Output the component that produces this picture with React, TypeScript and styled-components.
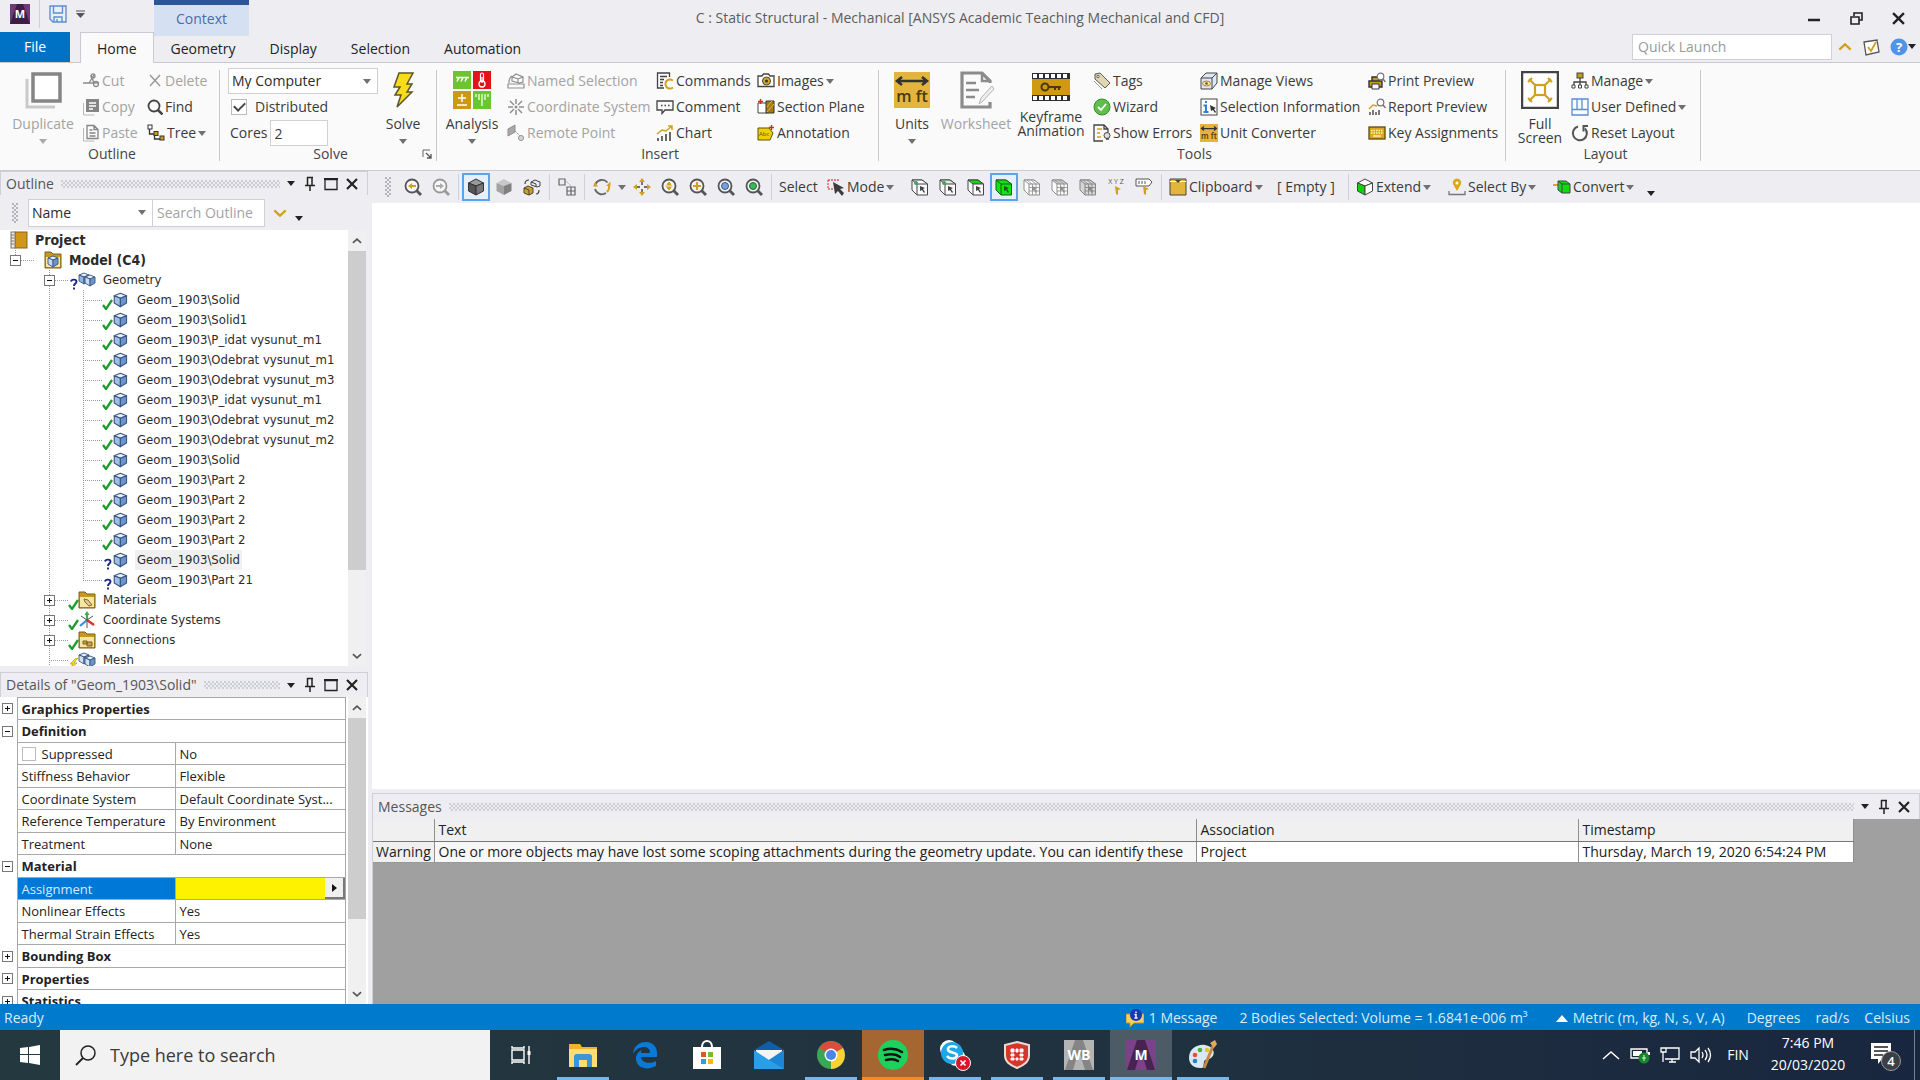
import React from "react";
import styled, { createGlobalStyle, css } from "styled-components";

const UI = `"Open Sans", "Noto Sans", sans-serif`;
const TREE = `"DejaVu Sans Condensed", "Noto Sans", sans-serif`;
const INK = "#3a3a3a";
const GOLD = "#d0a020";
const MUTED = "#a3a3a3";

const GlobalStyle = createGlobalStyle`
  * { box-sizing: border-box; }
  html, body, #root { height: 100%; }
  body { margin: 0; overflow: hidden; background: #eeeef2; font-family: ${UI}; font-size: 14px; line-height: 16px; color: #2b2b2b; }
  button, input, select { font: inherit; color: inherit; margin: 0; padding: 0; border: 0; background: none; border-radius: 0; }
  svg { display: block; flex: none; }
`;

/* ------------------------------------------------------------------ icons */

type IconProps = { w?: number; h?: number; box?: string; children?: React.ReactNode };
const Icon = ({ w = 18, h = w, box = `0 0 ${w} ${h}`, children }: IconProps) => (
  <svg width={w} height={h} viewBox={box} fill="none" aria-hidden="true">{children}</svg>
);

const Caret = ({ color = "#707070", w = 8 }: { color?: string; w?: number }) => (
  <Icon w={w} h={5} box="0 0 8 5"><path d="M0 0h8L4 5z" fill={color} /></Icon>
);
const Chevron = ({ color, up, w = 16 }: { color: string; up?: boolean; w?: number }) => (
  <Icon w={w} h={10} box="0 0 16 10">
    <path d={up ? "M1.500 8L8 2l6.500 6" : "M1.500 2L8 8l6.500-6"} stroke={color} strokeWidth="2.600" />
  </Icon>
);
const Grip = () => (
  <Icon w={8} h={22}>
    {[0, 4, 8, 12, 16].map((y) => (
      <g key={y} fill="#b4b4ba">
        <rect x="0" y={y + 1} width="2" height="2" /><rect x="4" y={y + 1} width="2" height="2" />
        <rect x="2" y={y + 3} width="2" height="2" />
      </g>
    ))}
  </Icon>
);
const Pin = () => (
  <Icon w={12} h={16}><path d="M3.500 1v8M3 1.500h6M8 1v8M1 9.500h10M6 10v5" stroke="#222" strokeWidth="1.500" /></Icon>
);
const Maximize = () => (
  <Icon w={14} h={14}><path d="M1 2.500h12v10H1z" stroke="#222" strokeWidth="1.300" /><path d="M0 2h14" stroke="#222" strokeWidth="2" /></Icon>
);
const Cross = ({ color = "#222", w = 12 }: { color?: string; w?: number }) => (
  <Icon w={w} box="0 0 12 12"><path d="M1 1l10 10M11 1L1 11" stroke={color} strokeWidth="2.200" /></Icon>
);

const AppLogo = () => (
  <Icon w={20} box="0 0 20 20">
    <rect width="20" height="20" fill="#6d3c78" /><path d="M7 0h6l7 20H0z" fill="#3d1e46" />
    <text x="10" y="14" fontSize="11" fontWeight="700" fill="#fff" textAnchor="middle" fontFamily="Open Sans">M</text>
  </Icon>
);
const Save = () => (
  <Icon w={18}><path d="M1 1h16v16H4l-3-3zM4.500 1v7h9V1M5 17v-5h8v5M8 14v3" stroke="#5b8fd6" strokeWidth="1.400" /></Icon>
);

const Duplicate = () => (
  <Icon w={38}>
    <path d="M3 8v28h28" stroke="#c9c9c9" strokeWidth="3" /><rect x="9" y="3" width="27" height="27" fill="#fff" stroke="#858585" strokeWidth="3.500" />
  </Icon>
);
const Cut = () => (
  <Icon><path d="M1 11h16M7 11l5-8M9 3l3 8" stroke="#8c8c8c" strokeWidth="1.400" /><circle cx="14" cy="12" r="2.500" stroke="#8c8c8c" strokeWidth="1.300" /><circle cx="11" cy="4" r="2" stroke="#8c8c8c" strokeWidth="1.300" /></Icon>
);
const Copy = () => (
  <Icon><path d="M1.500 5v12h11" stroke="#b8b8b8" /><rect x="4" y="1" width="13" height="13" fill="#858585" /><path d="M7 5h7M7 8h7M7 11h4" stroke="#fff" strokeWidth="1.300" /></Icon>
);
const Paste = () => (
  <Icon><path d="M1.500 4v13h11" stroke="#b8b8b8" /><path d="M5 1.500h7l4 4v9H5zM12 1.500v4h4M7.500 6h3M7.500 9h6M7.500 12h6" stroke="#858585" strokeWidth="1.300" /></Icon>
);
const Remove = () => (
  <Icon w={16}><path d="M3 2l10 11M13 2L3 13" stroke="#9a9a9a" strokeWidth="1.500" /></Icon>
);
const Find = () => (
  <Icon w={16}><circle cx="7" cy="7" r="5.500" stroke="#444" strokeWidth="1.800" /><path d="M11 11l4.500 4.500" stroke="#444" strokeWidth="2.500" /></Icon>
);
const TreeIcon = () => (
  <Icon w={18}>
    <path d="M2.500 5v5h5M7.500 10v5h6" stroke="#333" strokeWidth="1.300" /><rect x="1" y="1" width="4" height="4" stroke="#333" fill="#fff" />
    <rect x="7" y="7.500" width="4" height="4" stroke="#333" fill="#cf9f1a" /><rect x="13" y="12" width="4" height="4" stroke="#333" fill="#cf9f1a" />
  </Icon>
);
const Bolt = () => (
  <Icon w={38}><path d="M15 2h14l-6 11h5l-5 8h5L13 36l4-12h-6l5-8h-6z" fill="#f7dc1c" stroke="#5a5530" strokeWidth="1.500" /></Icon>
);
const Launcher = () => (
  <Icon w={10}><path d="M1 8V1h7" stroke="#666" /><path d="M4 4l5 5M9 5v4H5" stroke="#555" strokeWidth="1.300" /></Icon>
);
const Analysis = () => (
  <Icon w={38}>
    <rect width="18" height="18" fill="#6ac52f" /><path d="M3 6.500h13M4 10.500l2-4M8 10.500l2-4M12 10.500l2-4" stroke="#fff" strokeWidth="1.500" />
    <rect x="20" width="18" height="18" fill="#e3121b" /><circle cx="29" cy="13" r="3" stroke="#fff" strokeWidth="1.300" /><path d="M27.500 10.500V3.500c0-2 3-2 3 0v7M29 6v6" stroke="#fff" strokeWidth="1.200" />
    <rect y="20" width="18" height="18" fill="#cb9a12" /><path d="M9 23v8M5 27h8M4 34h10" stroke="#fff" strokeWidth="1.500" />
    <rect x="20" y="20" width="18" height="18" fill="#6ac52f" /><path d="M23 23v3M26 23v6M29 23v12M32 23v6M35 23v3" stroke="#e8ffe0" strokeWidth="1.400" />
  </Icon>
);
const NamedSel = () => (
  <Icon><path d="M1 12h16v4H1zM5 9V5l4-3 7 3v5l-4 1zM5 5l6 2v4M11 7l5-2M2 11c0-4 1-6 3-7" stroke="#8f8f8f" strokeWidth="1.200" /></Icon>
);
const CoordSys = () => (
  <Icon><path d="M9 1v5M9 12v5M1 9h5M12 9h5M3 3l4 4M11 11l4 4M15 3l-4 4M7 11l-4 4" stroke="#8f8f8f" strokeWidth="1.500" /><circle cx="9" cy="9" r="1.500" fill="#8f8f8f" /></Icon>
);
const RemotePt = () => (
  <Icon><path d="M1 5l7-4v7l-7 4z" fill="#a9a9a9" stroke="#8f8f8f" /><path d="M8 7l5 5" stroke="#8f8f8f" strokeDasharray="2 1" /><circle cx="14" cy="14" r="2.500" fill="#d8d8d8" stroke="#8f8f8f" /></Icon>
);
const Commands = () => (
  <Icon><path d="M8 16H1.500V1h12v4M4 4.500h7M4 7.500h4M4 10.500h3M4 13.500h3" stroke="#444" strokeWidth="1.300" /><path d="M17 8.500c-4-2.500-8 0-7.500 4s4.500 5 7.500 3" stroke={GOLD} strokeWidth="2" /></Icon>
);
const Comment = () => (
  <Icon><path d="M1 3h16v9H9l-3 3.500V12H1z" stroke="#444" strokeWidth="1.300" /><path d="M5 7.500h1.500M8.500 7.500H10M12 7.500h1.500" stroke="#444" strokeWidth="1.300" /></Icon>
);
const Chart = () => (
  <Icon><path d="M2 17v-3M6 17v-5M10 17V10M14 17V8" stroke="#444" strokeWidth="1.600" /><path d="M1 10l5-4 4 1 6-5M12 2h4v4" stroke={GOLD} strokeWidth="1.500" /></Icon>
);
const Images = () => (
  <Icon><path d="M1 4h4l1.500-2h5L13 4h4v10.500H1z" fill="#fff" stroke="#444" strokeWidth="1.300" /><circle cx="9.500" cy="9" r="4" fill="#d6a91f" stroke="#444" /><circle cx="9.500" cy="9" r="1.500" fill="#333" /></Icon>
);
const Section = () => (
  <Icon><path d="M1 5h9v10H1z" fill="#fff" stroke="#444" /><path d="M9 3h8v12H9z" fill="#a67c12" stroke="#333" /><path d="M10 9l5-6M10 14l7-8" stroke="#e0b840" /><path d="M1 3.500h5M3.500 1v5" stroke="#d22" strokeWidth="1.400" /></Icon>
);
const Annotation = () => (
  <Icon><path d="M1 4h11l4 5-3 7H1z" fill="#f0d000" stroke="#5e5300" /><text x="2" y="12" fontSize="6" fill="#5e5300" fontFamily="Open Sans">Abc</text><path d="M12 3.500h5M14.500 1v5" stroke="#d22" strokeWidth="1.400" /></Icon>
);
const Units = ({ s = 36 }: { s?: number }) => (
  <Icon w={s} box="0 0 36 36">
    <rect width="36" height="36" fill="#e3b53c" /><path d="M4 9h28M8 5L3 9l5 4M28 5l5 4-5 4" stroke="#333" strokeWidth="2.500" />
    <text x="18" y="30" fontSize="16" fontWeight="600" fill="#4a3a10" textAnchor="middle" fontFamily="Open Sans">m ft</text>
  </Icon>
);
const Worksheet = () => (
  <Icon w={38}><path d="M33 12V10L25 2H5v34h28v-5" stroke="#8b8b8b" strokeWidth="3.200" /><path d="M25 2v8h8M9 12h10M9 19h13M9 26h9" stroke="#8b8b8b" strokeWidth="2.500" /><path d="M22 33l2-6 11-12 2 3-11 12z" fill="#eee" stroke="#b5b5b5" /></Icon>
);
const Keyframe = () => (
  <Icon w={38} h={28}>
    <rect width="38" height="28" fill="#2f2f2f" /><rect y="6" width="38" height="16" fill="#cf9a12" />
    {[1, 7, 13, 19, 25, 31].map((x) => (<g key={x} fill="#fff"><rect x={x} y="1" width="4" height="4" /><rect x={x} y="23" width="4" height="4" /></g>))}
    <circle cx="13" cy="14" r="3.500" stroke="#4a3a10" strokeWidth="2" /><path d="M17 14h12M23 14v3M27 14v3" stroke="#4a3a10" strokeWidth="2" />
  </Icon>
);
const Tags = () => (
  <Icon><path d="M2 2l5-1 10 10-5 5L2 7z" fill="#e0d6b0" stroke="#5a5a5a" /><circle cx="5" cy="4.500" r="1.200" fill="#fff" stroke="#5a5a5a" /><path d="M1 9l8 8" stroke="#999" /></Icon>
);
const Wizard = () => (
  <Icon><circle cx="9" cy="9" r="8" fill="#5ec04a" stroke="#3e8a30" /><path d="M5 9l3 3 5-6" stroke="#fff" strokeWidth="1.800" /></Icon>
);
const ShowErrors = () => (
  <Icon><path d="M10 17H1V1h10l4 4v3M11 1v4h4" stroke="#444" strokeWidth="1.300" /><path d="M4 5h5M4 9h3M4 13h4" stroke={GOLD} strokeWidth="1.300" /><circle cx="14" cy="11.500" r="3" fill="#ddd" stroke="#444" /><path d="M13 15h3" stroke="#444" strokeWidth="1.500" /></Icon>
);
const ManageViews = () => (
  <Icon><path d="M1 6l5-5h11v10l-5 6H1zM12 6v11M12 6l5-5M1 6h11" fill="#dde8f5" stroke="#444" /><ellipse cx="6.500" cy="11.500" rx="4" ry="2.500" fill="#f1e4ad" stroke="#b18a1b" /><circle cx="6.500" cy="11.500" r="1.300" fill="#6d560c" /></Icon>
);
const SelInfo = () => (
  <Icon><rect x="1" y="1" width="16" height="16" fill="#fff" stroke="#444" /><path d="M3.500 7.500H6V14M3.500 14h5M6 3v2" stroke="#2f7fd4" strokeWidth="2" /><path d="M10 7l6 3-2 1 2 3-1 1-2-3-2 1z" fill="#333" /></Icon>
);
const Lens = () => (<><circle cx="12.500" cy="4.500" r="3.300" fill="#fff" stroke="#777" strokeWidth="1.200" /><path d="M15 7l2.500 3" stroke="#777" strokeWidth="1.500" /></>);
const PrintPrev = () => (
  <Icon><path d="M4 9V5h7v4M1 9h13v6H1z" fill="#c49a1c" stroke="#333" strokeWidth="1.400" /><path d="M4 12h7v5H4z" fill="#fff" stroke="#333" /><Lens /></Icon>
);
const ReportPrev = () => (
  <Icon><path d="M2 17v-3M5 17v-5M8 17v-3M11 17v-5" stroke="#444" strokeWidth="1.400" /><path d="M1 11l4-4 4 1" stroke={GOLD} strokeWidth="1.400" /><Lens /></Icon>
);
const Keyboard = () => (
  <Icon><rect x="1" y="3" width="16" height="12" fill="#d9a91d" stroke="#5c4a14" strokeWidth="1.300" /><path d="M3 6.500h12M3 9h12" stroke="#fff3c4" strokeWidth="1.400" strokeDasharray="1.500 1" /><path d="M5 12h8" stroke="#fff3c4" strokeWidth="1.400" /></Icon>
);
const FullScreen = () => (
  <Icon w={38}><rect x="1" y="1" width="36" height="36" fill="#fff" stroke="#444" strokeWidth="2.500" /><rect x="14" y="14" width="10" height="10" stroke={GOLD} strokeWidth="2.200" /><path d="M14 14L8 8M24 14l6-6M14 24l-6 6M24 24l6 6M7 11l4-4M27 7l4 4M7 27l4 4M27 31l4-4" stroke={GOLD} strokeWidth="2.200" /></Icon>
);
const ManageIcon = () => (
  <Icon><path d="M9 6v4M3 14v-4h12v4M9 10v4" stroke="#444" strokeWidth="1.300" /><rect x="6" y="1" width="6" height="5" fill="#c49a1c" stroke="#444" /><path d="M1 13h3v3H1zM7.500 13h3v3h-3zM14 13h3v3h-3z" fill="#fff" stroke="#444" /></Icon>
);
const UserDefined = () => (
  <Icon><path d="M1 1h16v16H1zM1 11.500h16M6 1v10.500M11 1v10.500" stroke="#5b8fd6" strokeWidth="1.300" /></Icon>
);
const Reset = () => (
  <Icon><path d="M7 2.500a7 7 0 1 0 7 2" stroke="#555" strokeWidth="2" /><path d="M11.500 2H17M12.500 2v5.500" stroke="#555" strokeWidth="2" /></Icon>
);
const TickNote = () => (
  <Icon><path d="M2 4l13-2 2 12-13 3z" fill="#fff" stroke="#555" strokeWidth="1.300" /><path d="M6 9l3 4 5-9" stroke={GOLD} strokeWidth="1.800" /></Icon>
);
const Help = () => (
  <Icon><circle cx="9" cy="9" r="8.500" fill="#4f94e8" /><text x="9" y="14" fontSize="13" fontWeight="700" fill="#fff" textAnchor="middle" fontFamily="Open Sans">?</text></Icon>
);

const Mag = ({ children, color = "#555" }: { children?: React.ReactNode; color?: string }) => (
  <Icon><circle cx="8" cy="8" r="6.500" stroke={color} strokeWidth="1.800" fill="#f7f7f7" />{children}<path d="M12.500 12.500l4.500 4.500" stroke={color} strokeWidth="2.800" /></Icon>
);
const Cube = ({ top, left, right, line = "#444" }: { top: string; left: string; right: string; line?: string }) => (
  <Icon><g stroke={line} strokeLinejoin="round"><path d="M1.500 5L9 1l7.500 4L9 8z" fill={top} /><path d="M1.500 5L9 8v9l-7.500-4z" fill={left} /><path d="M9 8l7.500-3v8L9 17z" fill={right} /></g></Icon>
);
const SwapCubes = () => (
  <Icon><path d="M8 4l4-2 5 2v4l-3 1-6-2zM8 4l5 2v3" fill="#e8e8ee" stroke="#444" /><path d="M1 10l4-2 5 2v5l-4 2-5-2zM1 10l5 2v5" fill={GOLD} stroke="#444" /><path d="M2 6c0-3 2-4 4-4M16 12c0 3-1 4-3 4" stroke="#444" strokeWidth="1.200" /></Icon>
);
const Explode = () => (
  <Icon><path d="M1 1h6v6H1zM9 9h8v8H9zM13 9v8M9 13h8" stroke="#666" strokeWidth="1.200" /><path d="M8 3l5 5" stroke="#bbb" /></Icon>
);
const Rotate = () => (
  <Icon><path d="M2.500 6a7.200 7.200 0 0 1 12-1.500" stroke="#666" strokeWidth="1.800" /><path d="M16 8a7.200 7.200 0 0 1-2 6" stroke={GOLD} strokeWidth="1.800" /><path d="M13 15A7.200 7.200 0 0 1 2 11" stroke="#666" strokeWidth="1.800" /><path d="M0 8.500h5L2 4zM17.500 3.500V8h-4.500z" fill={GOLD} /></Icon>
);
const Pan = () => (
  <Icon><path d="M9 0l3 4H6zM9 18l3-4H6zM0 9l4-3v6zM18 9l-4-3v6z" fill={GOLD} /><path d="M9 4v3M9 11v3M4 9h3M11 9h3" stroke="#444" strokeWidth="1.400" /></Icon>
);
const ModeIcon = () => (
  <Icon><path d="M1 2h11M1 2v9h5" stroke="#e25555" strokeWidth="1.300" strokeDasharray="2 1" /><path d="M6 4l11 6-4 1 4 4-2 3-4-5-3 3z" fill="#3c3c3c" /></Icon>
);
const SelCube = ({ fill = "#fbfbfd", top = fill, dot, line = "#444", cross }: { fill?: string; top?: string; dot?: boolean; line?: string; cross?: boolean }) => (
  <Icon>
    <path d="M1 2h10l5.500 4v11H6L1 12z" fill={fill} stroke={line} /><path d="M1 2h10l5.500 4H6z" fill={top} stroke={line} /><path d="M6 6v11" stroke={line} />
    {cross && <path d="M6 9.500h10M6 13h10M9.500 6v11M13 6v11M4 2l5 4M8 2l5 4" stroke={line} strokeWidth="0.800" />}
    {dot && <circle cx="5" cy="5" r="2" fill="#3ba55a" />}
    <path d="M9 8l5 2-2 1 2 3-1 1-2-3-2 1z" fill={line} />
  </Icon>
);
const Wand = ({ tag }: { tag?: boolean }) => (
  <Icon>
    {tag ? <path d="M1 1h13l3 3-3 4H1zM4 3v3M7 3v3M10 3v3" fill="#fff" stroke="#555" /> :
      <text x="9" y="6" fontSize="7" fill="#555" textAnchor="middle" fontFamily="Open Sans">X Y Z</text>}
    <path d="M8 8l6 3-3 1v5l-2-1z" fill={GOLD} />
  </Icon>
);
const Clip = () => (<Icon><path d="M1 1h16v16H1z" fill="#e3b53c" stroke="#444" /><path d="M1 3.500h16" stroke="#fff" /><path d="M6 2l3 3 3-3z" fill="#444" /></Icon>);
const Marker = () => (
  <Icon><path d="M9 13L5 6a4.200 4.200 0 1 1 8 0z" fill="#dda51b" /><circle cx="9" cy="5" r="1.500" fill="#fff" /><path d="M1 13v3.500h16V13" stroke="#777" strokeWidth="1.300" /></Icon>
);
const Convert = () => (
  <Icon><path d="M0 7h5" stroke={GOLD} strokeWidth="1.800" /><path d="M5 3h8l4 3v9H9l-4-3z" fill="#15d815" stroke="#444" /><path d="M5 3l4 3h8M9 6v9" stroke="#444" /></Icon>
);

const Book = () => (<Icon><rect x="5" y="1" width="12" height="16" fill="#d0961a" stroke="#8a6410" /><rect x="1" y="1" width="4" height="16" fill="#f4ecd0" stroke="#777" /><path d="M1 4h3M1 7h3M1 10h3M1 13h3" stroke="#777" /></Icon>);
const Folder = ({ children }: { children?: React.ReactNode }) => (
  <Icon><path d="M1 1h6l2 2h8v14H1z" fill="#c8971f" stroke="#7b6118" /><path d="M2 6h14v10H2z" fill="#f5e6a8" />{children}</Icon>
);
const CubeShape = ({ x, y, light = "#c4dbf3" }: { x: number; y: number; light?: string }) => (
  <g transform={`translate(${x} ${y})`} stroke="#3a5580" strokeWidth="0.900" strokeLinejoin="round">
    <path d="M1 3l5-2 5 2-5 2z" fill="#e4f0fc" /><path d="M1 3l5 2v7L1 9z" fill={light} /><path d="M6 5l5-2v6l-5 3z" fill="#6a94cc" />
  </g>
);
const BodyIcon = () => (<Icon w={16} box="0 0 13 13"><CubeShape x={0} y={0} light="#9fc0e6" /></Icon>);
const GeometryIcon = () => (<Icon><CubeShape x={0} y={1} light="#8fb2de" /><CubeShape x={6} y={3} /></Icon>);
const MeshIcon = () => (<Icon><CubeShape x={0} y={1} light="#d5dfec" /><CubeShape x={6} y={4} light="#d5dfec" /></Icon>);
const CoordIcon = () => (
  <Icon><path d="M9 9V2" stroke="#36b34a" strokeWidth="2.200" /><path d="M6.500 4L9 0l2.500 4z" fill="#36b34a" /><path d="M9 9l7 5" stroke="#e03030" strokeWidth="2.500" /><path d="M9 9l-7 6" stroke="#3a8ee0" strokeWidth="2.200" /><path d="M9 9l6-4M9 9L3 5M9 9v8" stroke="#555" /></Icon>
);
const Tick = () => (<Icon w={11} h={12}><path d="M1 7l3 4 6-9" stroke="#1f9a2c" strokeWidth="2.300" /></Icon>);
const Quest = () => (<Icon w={11} h={12}><path d="M3 3.500C3.500 1 8.500 1 8.500 3.700 8.500 5.500 6 5.700 6 8M6 9.500v2" stroke="#16248c" strokeWidth="1.900" /></Icon>);
const Flash = () => (<Icon w={11} h={12}><path d="M8 0L2 6h3l-4 6 8-7H6l4-5z" fill="#f3dc3a" stroke="#b59a1a" strokeWidth="0.700" /></Icon>);

/* ---------------------------------------------------------- window chrome */

const Window = styled.div`display: flex; flex-direction: column; height: 100vh; min-height: 700px;`;
const TitleBar = styled.header`display: grid; grid-template-columns: 1fr auto 1fr; height: 32px; flex: none; color: #5c5c5c;`;
const TitleLeft = styled.div`display: flex;`;
const QuickBar = styled.div`display: flex; align-items: center; width: 154px; height: 28px; padding-left: 10px; gap: 9px;`;
const ContextTag = styled.div`width: 95px; border-top: 5px solid #2b579a; background: #d5e0f3; color: #4a6cae; text-align: center; line-height: 27px;`;
const Title = styled.h1`margin: 0; font-size: 14px; font-weight: 400; line-height: 36px;`;
const WindowButtons = styled.div`display: flex; justify-content: flex-end; padding-right: 1px;`;
const PlainButton = styled.button<{ $w?: number }>`
  display: flex; align-items: center; justify-content: center; flex: none; ${(p) => p.$w && `width: ${p.$w}px;`}
`;
const VLine = styled.i`width: 1px; align-self: stretch; background: #d0d0d6;`;

const TabRow = styled.nav`display: flex; height: 31px; flex: none; position: relative; z-index: 1; margin-bottom: -1px;`;
const FileTab = styled.button`width: 70px; height: 30px; margin-right: 10px; background: #0072c6; color: #fff;`;
const Tab = styled.button<{ $on?: boolean }>`
  padding: 1px 16px 0; height: 31px; border: 1px solid transparent; border-bottom: 0; color: #222;
  ${(p) => p.$on && css`background: #fafafa; border-color: #c9c9d2;`}
`;
const TabTools = styled.div`display: flex; align-items: center; margin-left: auto; height: 29px; padding-right: 4px; gap: 6px;`;
const Quick = styled.input`width: 200px; height: 26px; padding: 0 5px; background: #fff; border: 1px solid #cfcfd6; &::placeholder { color: #9a9a9a; opacity: 1; }`;

/* ----------------------------------------------------------------- ribbon */

const Ribbon = styled.div`display: flex; flex: none; background: #fafafa; border: solid #c9c9d2; border-width: 1px 0;`;
const Group = styled.section<{ $w: number }>`
  display: grid; grid-template-rows: 78px 16px; width: ${(p) => p.$w}px; padding: 5px 0 8px; flex: none;
  background: linear-gradient(#c9c9cf, #c9c9cf) right 7px / 1px 91px no-repeat;
`;
const GroupBody = styled.div`display: flex; padding-left: 8px;`;
const GroupName = styled.div`
  display: grid; grid-template-columns: 1fr auto 1fr; color: #444; padding-left: 9px; padding-right: 5px;
  span { grid-column: 2; } button { justify-self: end; align-self: center; }
`;
const Col = styled.div<{ $w: number }>`display: grid; grid-template-rows: repeat(3, 26px); align-items: center; justify-items: start; width: ${(p) => p.$w}px; flex: none;`;
const Small = styled.button`
  display: flex; align-items: center; gap: 2px; height: 24px; white-space: nowrap; color: ${INK};
  &:disabled { color: ${MUTED}; }
`;
const Big = styled.button<{ $w: number }>`
  display: flex; flex-direction: column; align-items: center; width: ${(p) => p.$w}px; flex: none; color: ${INK};
  line-height: 14px; padding-top: 3px;
  &:disabled { color: ${MUTED}; }
`;
const BigArt = styled.span`display: grid; place-items: center; height: 38px; margin-bottom: 8px;`;
const BigText = styled.span`display: block; white-space: pre; margin-bottom: 8px;`;
const Combo = styled.span<{ $w: number; $h: number }>`
  display: grid; grid-template-columns: 1fr 20px; align-items: center; width: ${(p) => p.$w}px; height: ${(p) => p.$h}px; background: #fff; border: 1px solid #cfcfd6;
  select { appearance: none; grid-area: 1 / 1 / 2 / 3; height: 100%; padding: 0 24px 0 3px; outline: 0; }
  svg { grid-area: 1 / 2; pointer-events: none; justify-self: center; }
`;
const CheckLabel = styled.label`display: flex; align-items: center; gap: 8px; padding-left: 3px; color: ${INK};`;
const Box = styled.input<{ $s: number }>`
  appearance: none; width: ${(p) => p.$s}px; height: ${(p) => p.$s}px; background: #fff; border: 1px solid #bcbcbc; display: grid; place-items: center; flex: none;
  &:checked::after { content: ""; width: 9px; height: 5px; border: solid #444; border-width: 0 0 2px 2px; transform: rotate(-45deg); margin-bottom: 3px; }
`;
const Cores = styled.label`display: flex; align-items: center; gap: 2px; padding-left: 2px; color: ${INK}; input { width: 58px; height: 26px; padding: 0 4px; background: #fff; border: 1px solid #cfcfd6; }`;

type Cmd = { icon: React.ReactNode; label: string; off?: boolean; drop?: boolean };
const Cmds = ({ w, items }: { w: number; items: Cmd[] }) => (
  <Col $w={w}>
    {items.map((c) => (
      <Small key={c.label} disabled={c.off}>{c.icon}<span>{c.label}</span>{c.drop && <Caret />}</Small>
    ))}
  </Col>
);
const BigCmd = ({ w, icon, label, off, drop }: Cmd & { w: number }) => (
  <Big $w={w} disabled={off}>
    <BigArt>{icon}</BigArt><BigText>{label}</BigText>{drop && <Caret color={off ? "#aaa" : undefined} />}
  </Big>
);

/* ----------------------------------------------------------------- panels */

const Main = styled.main`display: flex; flex: 1; min-height: 0;`;
const Left = styled.aside`display: flex; flex-direction: column; width: 372px; flex: none; padding-right: 4px;`;
const Right = styled.div`display: flex; flex-direction: column; flex: 1; min-width: 0;`;
const Head = styled.div<{ $h: number }>`
  display: flex; align-items: center; height: ${(p) => p.$h}px; flex: none; padding: 0 9px 0 5px; border: solid #cfcfd8; border-width: 1px 1px 0 1px; color: #555;
  h2 { margin: 0; font-size: 14px; font-weight: 400; }
`;
const Dots = styled.i`
  flex: 1; height: 8px; margin: 0 6px 0 7px;
  background: radial-gradient(circle at 1px 1px, #cdcdd4 1px, transparent 1px) 0 0 / 4px 4px, radial-gradient(circle at 1px 1px, #cdcdd4 1px, transparent 1px) 2px 2px / 4px 4px;
`;
const HeadTools = styled.div`display: flex; align-items: center; gap: 8px;`;
const PanelHead = ({ title, h = 24, max = true }: { title: string; h?: number; max?: boolean }) => (
  <Head $h={h}>
    <h2>{title}</h2><Dots />
    <HeadTools>
      <PlainButton aria-label="Options"><Caret w={10} color="#222" /></PlainButton>
      <PlainButton aria-label="Pin"><Pin /></PlainButton>
      {max && <PlainButton aria-label="Maximize"><Maximize /></PlainButton>}
      <PlainButton aria-label="Close"><Cross /></PlainButton>
    </HeadTools>
  </Head>
);
const OutlineBar = styled.div`display: flex; align-items: center; height: 35px; flex: none; padding-left: 12px; gap: 8px;`;
const FilterBox = styled.div`display: flex; input { width: 112px; height: 28px; padding: 0 4px; background: #fff; border: 1px solid #cfcfd6; border-left: 0; } input::placeholder { color: ${MUTED}; opacity: 1; }`;
const Low = styled.span`padding-top: 12px; display: flex;`;

const Scroller = styled.div`display: flex; flex: 1; min-height: 0; overflow: hidden;`;
const Bar = styled.div`display: flex; flex-direction: column; width: 18px; flex: none; background: #f0f0f0; margin-right: 2px; button { height: 21px; }`;
const Track = styled.div`flex: 1; min-height: 0;`;
const Thumb = styled.div<{ $size: number }>`height: ${(p) => p.$size}%; background: #cdcdcd;`;
const ScrollBar = ({ size }: { size: number }) => (
  <Bar>
    <PlainButton aria-label="Scroll up"><Chevron up w={10} color="#555" /></PlainButton>
    <Track><Thumb $size={size} /></Track>
    <PlainButton aria-label="Scroll down"><Chevron w={10} color="#555" /></PlainButton>
  </Bar>
);

const TreeList = styled.div`flex: 1; background: #fff; overflow: hidden; font-family: ${TREE};`;
const Row = styled.div`display: flex; height: 20px; white-space: nowrap;`;
const V = "repeating-linear-gradient(#999 0 1px, transparent 1px 2px)";
const H = "repeating-linear-gradient(90deg, #999 0 1px, transparent 1px 2px) 15px 10px / 19px 1px no-repeat";
const guides: Record<string, string> = {
  none: "none",
  line: `${V} 15px 0 / 1px 20px no-repeat`,
  tee: `${V} 15px 0 / 1px 20px no-repeat, ${H}`,
  elbow: `${V} 15px 0 / 1px 10px no-repeat, ${H}`,
};
const Guide = styled.span<{ $g: string }>`width: 34px; flex: none; display: flex; align-items: center; padding-left: 10px; background: ${(p) => guides[p.$g]};`;
const Expand = styled.button`width: 11px; height: 11px; background: #fff; border: 1px solid #777; display: grid; place-items: center;`;
const Sign = ({ open }: { open?: boolean }) => (
  <Icon w={9}><path d={open ? "M2 4.500h5" : "M2 4.500h5M4.500 2v5"} stroke="#111" /></Icon>
);
const Mark = styled.span`width: 10px; flex: none; display: flex; align-items: flex-end;`;
const Art = styled.span`width: 18px; flex: none; display: flex; align-items: center; justify-content: center;`;
const Name = styled.span<{ $bold?: boolean; $sel?: boolean }>`
  margin-left: 5px; padding: 0 2px; line-height: 20px; font-size: 13px; background: ${(p) => (p.$sel ? "#f0f0f0" : "none")};
  ${(p) => p.$bold && css`font-size: 14px; font-weight: 700;`}
`;

type Node = { g: string[]; open?: boolean; exp?: boolean; mark?: React.ReactNode; art: React.ReactNode; name: string; bold?: boolean; sel?: boolean };
const leaf = (name: string, mark: React.ReactNode = <Tick />, extra: Partial<Node> = {}): Node => ({
  g: ["none", "line", "tee"], mark, art: <BodyIcon />, name: `Geom_1903\\${name}`, ...extra,
});
const nodes: Node[] = [
  { g: [], art: <Book />, name: "Project", bold: true },
  { g: ["elbow"], exp: true, open: true, art: <Folder><CubeShape x={3} y={4} /></Folder>, name: "Model (C4)", bold: true },
  { g: ["none", "tee"], exp: true, open: true, mark: <Quest />, art: <GeometryIcon />, name: "Geometry" },
  leaf("Solid"), leaf("Solid1"), leaf("P_idat vysunut_m1"), leaf("Odebrat vysunut_m1"), leaf("Odebrat vysunut_m3"),
  leaf("P_idat vysunut_m1"), leaf("Odebrat vysunut_m2"), leaf("Odebrat vysunut_m2"), leaf("Solid"),
  leaf("Part 2"), leaf("Part 2"), leaf("Part 2"), leaf("Part 2"), leaf("Solid", <Quest />, { sel: true }),
  leaf("Part 21", <Quest />, { g: ["none", "line", "elbow"] }),
  { g: ["none", "tee"], exp: true, mark: <Tick />, art: <Folder><path d="M6 8l4 1 4 5-3 1-4-4z" fill="#e0c890" stroke="#8a6a20" /></Folder>, name: "Materials" },
  { g: ["none", "tee"], exp: true, mark: <Tick />, art: <CoordIcon />, name: "Coordinate Systems" },
  { g: ["none", "tee"], exp: true, mark: <Tick />, art: <Folder><path d="M5 10h4v3H5zM9 11h5v4H9z" fill="#c9a44a" stroke="#7b6118" /></Folder>, name: "Connections" },
  { g: ["none", "tee"], mark: <Flash />, art: <MeshIcon />, name: "Mesh" },
];

const Props = styled.table`
  width: 100%; align-self: start; border-collapse: collapse; table-layout: fixed; background: #fff; color: #222; font-size: 13px; line-height: 16px;
  tr { height: 22px; } tr:nth-child(even) { height: 23px; }
  td, th { border: 1px solid #a8a8a8; padding: 0 2px 0 4px; text-align: left; font-weight: 400; white-space: nowrap; overflow: hidden; height: inherit; }
  td:first-child { border-width: 0 1px 0 0; padding: 0 2px; }
  label { display: flex; align-items: center; gap: 6px; }
`;
const PropsArea = styled.div`
  display: grid; grid-template: minmax(0, 1fr) / minmax(0, 1fr) auto; flex: 1; min-height: 0; overflow: hidden; background: #fff;
  ${Bar} { margin-left: 2px; min-height: 0; }
`;
const Category = styled.th`&& { font-weight: 700; }`;
const Picked = styled.th`&& { background: #0078d7; color: #d7ebfb; }`;
const Warn = styled.td`&& { background: #fff200; padding: 0; }`;
const Fly = styled.button`display: grid; place-items: center; width: 20px; height: 21px; margin-left: auto; background: #f0f0f0; border: solid #777; border-width: 0 2px 2px 0;`;

type Prop = [string, string?];
const details: { cat: string; open?: boolean; rows?: Prop[] }[] = [
  { cat: "Graphics Properties" },
  { cat: "Definition", open: true, rows: [["Suppressed", "No"], ["Stiffness Behavior", "Flexible"], ["Coordinate System", "Default Coordinate Syst..."], ["Reference Temperature", "By Environment"], ["Treatment", "None"]] },
  { cat: "Material", open: true, rows: [["Assignment"], ["Nonlinear Effects", "Yes"], ["Thermal Strain Effects", "Yes"]] },
  { cat: "Bounding Box" }, { cat: "Properties" }, { cat: "Statistics" },
];

const ViewBar = styled.div`display: flex; align-items: center; height: 32px; flex: none; padding-left: 13px; color: ${INK}; > svg { margin-right: 6px; }`;
const Tool = styled.button<{ $on?: boolean; $w?: number }>`
  display: flex; align-items: center; justify-content: center; width: ${(p) => p.$w || 28}px; height: 28px; flex: none; border: 2px solid transparent;
  ${(p) => p.$on && css`border-color: #5fa3e6; background: #e6f0fa;`}
`;
const TextTool = styled.button<{ $w: number }>`display: flex; align-items: center; gap: 2px; width: ${(p) => p.$w}px; padding-left: 4px; flex: none; height: 28px; white-space: nowrap;`;
const Split = styled.i`width: 1px; height: 26px; margin: 0 3px; background: #d0d0d8; flex: none;`;
const Canvas = styled.section`flex: 1; min-height: 0; background: #fff;`;
const Dock = styled.section`display: flex; flex-direction: column; height: 215px; flex: none; padding-top: 4px;`;
const DockBody = styled.div`flex: 1; background: #a0a0a0; overflow: hidden; border-left: 1px solid #cfcfd8;`;
const MsgTable = styled.table`
  border-collapse: collapse; table-layout: fixed; width: 1480px; color: #222;
  th, td { height: 21px; padding: 0 4px; text-align: left; font-weight: 400; white-space: nowrap; overflow: hidden; border-right: 1px solid #8f8f8f; background: #fff; }
  th { height: 22px; background: #f0f0f0; border-bottom: 1px solid #777; }
  td:first-child { background: #f0f0f0; padding: 0 3px; } td:nth-child(2) { background: #f7f7f7; } td { border-bottom: 1px solid #999; }
`;

/* ------------------------------------------------------- status & taskbar */

const Status = styled.footer`
  display: flex; align-items: center; height: 26px; flex: none; padding: 2px 10px 0 4px; background: #007acc; color: #d9ecf9;
  > span { margin-right: auto; }
`;
const StatusItem = styled.button<{ $ml: number }>`display: flex; align-items: center; gap: 5px; margin-left: ${(p) => p.$ml}px; white-space: nowrap;`;
const Taskbar = styled.nav`display: flex; height: 50px; flex: none; background: linear-gradient(90deg, #24393f, #20313f 60%, #19263f);`;
const Start = styled.button`width: 60px; display: grid; place-items: center;`;
const Search = styled.label`display: flex; align-items: center; gap: 14px; width: 430px; padding-left: 15px; background: #f2f2f2; input { flex: 1; font-size: 18px; outline: 0; } input::placeholder { color: #3a3a3a; opacity: 1; }`;
const TaskButton = styled.button<{ $run?: boolean; $bg?: string; $line?: string }>`
  display: grid; place-items: center; width: 62px; flex: none;
  background: ${(p) => (p.$run ? `linear-gradient(${p.$line || "#79b7ea"}, ${p.$line || "#79b7ea"}) bottom / ${p.$bg ? 100 : 84}% 3px no-repeat` : "none")};
  background-color: ${(p) => p.$bg || "transparent"};
`;
const Tray = styled.div`display: flex; align-items: center; margin-left: auto; color: #fff; gap: 10px;`;
const Clock = styled.button`font-size: 14px; line-height: 22px; width: 96px; padding: 0 8px 2px 0;`;
const Edge = styled.i`width: 1px; align-self: stretch; background: #77808e; margin: 0 5px 0 2px;`;

const Letter = ({ t, a, b }: { t: string; a: string; b: string }) => (
  <Icon w={30}><rect width="30" height="30" fill={a} /><path d="M11 0h8l10 30h-8L15 10 9 30H1z" fill={b} /><text x="15" y="20" fontSize="14" fontWeight="700" fill="#fff" textAnchor="middle" fontFamily="Open Sans">{t}</text></Icon>
);
const taskApps: { n: string; run?: boolean; bg?: string; line?: string; i: React.ReactNode }[] = [
  { n: "File Explorer", run: true, i: <Icon w={28} h={26}><path d="M0 2h11l2 3h15v20H0z" fill="#f2b22c" /><path d="M0 7h28v18H0z" fill="#ffdd70" /><path d="M5 25V15q0-3 3-3h12q3 0 3 3v10h-5v-7h-8v7z" fill="#3a96d8" /></Icon> },
  { n: "Edge", i: <Icon w={26} h={28}><path d="M1 13C2 4 8 1 14 1c7 0 11 5 11 11v4H9c0 5 8 8 15 4v5C12 31 3 25 4 16c1-4 3-6 6-7-1 1-1 2-1 3h9C18 3 5 5 1 13z" fill="#0a7ad8" /></Icon> },
  { n: "Store", i: <Icon w={28} h={30}><path d="M0 7h28v22H0z" fill="#fff" /><path d="M9 7c0-8 10-8 10 0" stroke="#fff" strokeWidth="2" /><path d="M8 12h5v5H8z" fill="#e5532d" /><path d="M15 12h5v5h-5z" fill="#7db928" /><path d="M8 19h5v5H8z" fill="#20a4e8" /><path d="M15 19h5v5h-5z" fill="#fbb812" /></Icon> },
  { n: "Mail", i: <Icon w={30} h={28}><path d="M0 9L15 0l15 9z" fill="#0f5fa8" /><path d="M2 9h26v12H2z" fill="#f4f4f4" /><path d="M0 9l15 10L30 9v19H0z" fill="#2a9fe8" /><path d="M15 19L30 9v19z" fill="#1d86d4" /></Icon> },
  { n: "Chrome", run: true, i: <Icon w={28}><circle cx="14" cy="14" r="14" fill="#38a852" /><path d="M14 14L2 7a14 14 0 0 1 24 0z" fill="#dd4b3e" /><path d="M14 14l12-7a14 14 0 0 1-12 21z" fill="#fdd033" /><circle cx="14" cy="14" r="6.500" fill="#fff" /><circle cx="14" cy="14" r="5" fill="#4a86ea" /></Icon> },
  { n: "Spotify", run: true, bg: "#a56631", line: "#f58a2a", i: <Icon w={30}><circle cx="15" cy="15" r="15" fill="#1ed05c" /><path d="M6 10c6-2 13-1 18 2M7 15c5-1 11-1 15 2M8 20c4-1 9-1 12 1" stroke="#111" strokeWidth="2.500" strokeLinecap="round" /></Icon> },
  { n: "Skype", run: true, i: <Icon w={32}><circle cx="10" cy="10" r="9" fill="#fff" /><circle cx="17" cy="18" r="9" fill="#fff" /><circle cx="13" cy="14" r="11" fill="#1ba7e8" /><path d="M18 9c-3-3-10-2-9 2 1 3 8 2 9 5 0 4-7 5-10 1" stroke="#fff" strokeWidth="2.500" /><circle cx="24" cy="24" r="7.500" fill="#d8152a" stroke="#fff" /><path d="M21.500 21.500l5 5M26.500 21.500l-5 5" stroke="#fff" strokeWidth="1.600" /></Icon> },
  { n: "FortiClient", run: true, i: <Icon w={26} h={28}><path d="M13 1l12 3v10c0 7-5 10-12 13C6 24 1 21 1 14V4z" fill="#d6362a" stroke="#e8dcd8" strokeWidth="2" /><path d="M7 8h3v3H7zM12 8h2v3h-2zM16 8h3v3h-3zM7 13h3v2H7zM16 13h3v2h-3zM7 17h3v2H7zM12 17h2v2h-2zM16 17h3v2h-3z" fill="#fff" stroke="#fff" /></Icon> },
  { n: "Workbench", run: true, i: <Letter t="WB" a="#b4b4b4" b="#858585" /> },
  { n: "Mechanical", run: true, bg: "#4d5b67", line: "#79b7ea", i: <Letter t="M" a="#7b4189" b="#47234f" /> },
  { n: "Paint", run: true, i: <Icon w={30}><path d="M1 18C1 9 9 4 17 5s11 8 7 12-7 1-8 5 1 6-4 6S1 25 1 18z" fill="#d9e9f4" /><circle cx="7" cy="15" r="2.300" fill="#e8502f" /><circle cx="12" cy="10" r="2.300" fill="#4caf3a" /><circle cx="19" cy="10" r="2.300" fill="#e9c22b" /><circle cx="7" cy="21" r="2.300" fill="#2e7cd0" /><path d="M16 28L25 6" stroke="#c98840" strokeWidth="3" /><path d="M22 3l5-3 2 4-3 4z" fill="#e5a95c" /></Icon> },
];

export default function App() {
  return (
    <Window>
      <GlobalStyle />
      <TitleBar>
        <TitleLeft>
          <QuickBar><AppLogo /><VLine /><PlainButton aria-label="Save"><Save /></PlainButton><PlainButton aria-label="Customize toolbar"><Icon w={9} h={9}><path d="M0 1h9" stroke="#555" /><path d="M0 3h9L4.500 8z" fill="#555" /></Icon></PlainButton></QuickBar>
          <ContextTag>Context</ContextTag>
        </TitleLeft>
        <Title>C : Static Structural - Mechanical [ANSYS Academic Teaching Mechanical and CFD]</Title>
        <WindowButtons>
          <PlainButton $w={42} aria-label="Minimize"><Icon w={12}><path d="M0 8h12" stroke="#222" strokeWidth="2.500" /></Icon></PlainButton>
          <PlainButton $w={42} aria-label="Restore"><Icon w={13}><path d="M4 4V1h8v7H9M1 5h8v7H1z" stroke="#222" strokeWidth="1.600" /></Icon></PlainButton>
          <PlainButton $w={42} aria-label="Close"><Cross w={13} /></PlainButton>
        </WindowButtons>
      </TitleBar>

      <TabRow>
        <FileTab>File</FileTab>
        <Tab $on>Home</Tab><Tab>Geometry</Tab><Tab>Display</Tab><Tab>Selection</Tab><Tab>Automation</Tab>
        <TabTools>
          <Quick aria-label="Quick Launch" placeholder="Quick Launch" />
          <PlainButton aria-label="Collapse ribbon"><Chevron up color={GOLD} w={14} /></PlainButton>
          <PlainButton $w={26} aria-label="Feedback"><TickNote /></PlainButton>
          <PlainButton aria-label="Help"><Help /><Caret color="#222" /></PlainButton>
        </TabTools>
      </TabRow>

      <Ribbon>
        <Group $w={220}>
          <GroupBody>
            <BigCmd w={70} icon={<Duplicate />} label="Duplicate" off drop />
            <Col $w={4} />
            <Cmds w={65} items={[{ icon: <Cut />, label: "Cut", off: true }, { icon: <Copy />, label: "Copy", off: true }, { icon: <Paste />, label: "Paste", off: true }]} />
            <Cmds w={70} items={[{ icon: <Remove />, label: "Delete", off: true }, { icon: <Find />, label: "Find" }, { icon: <TreeIcon />, label: "Tree", drop: true }]} />
          </GroupBody>
          <GroupName><span>Outline</span></GroupName>
        </Group>
        <Group $w={217}>
          <GroupBody>
            <Col $w={150}>
              <Combo $w={150} $h={26}><select aria-label="Solver machine" defaultValue="My Computer"><option>My Computer</option></select><Caret /></Combo>
              <CheckLabel><Box type="checkbox" $s={16} defaultChecked />Distributed</CheckLabel>
              <Cores>Cores<input defaultValue="2" /></Cores>
            </Col>
            <BigCmd w={50} icon={<Bolt />} label="Solve" drop />
          </GroupBody>
          <GroupName><span>Solve</span><button aria-label="Solve settings"><Launcher /></button></GroupName>
        </Group>
        <Group $w={442}>
          <GroupBody>
            <BigCmd w={54} icon={<Analysis />} label="Analysis" drop />
            <Col $w={8} />
            <Cmds w={149} items={[{ icon: <NamedSel />, label: "Named Selection", off: true }, { icon: <CoordSys />, label: "Coordinate System", off: true }, { icon: <RemotePt />, label: "Remote Point", off: true }]} />
            <Cmds w={101} items={[{ icon: <Commands />, label: "Commands" }, { icon: <Comment />, label: "Comment" }, { icon: <Chart />, label: "Chart" }]} />
            <Cmds w={110} items={[{ icon: <Images />, label: "Images", drop: true }, { icon: <Section />, label: "Section Plane" }, { icon: <Annotation />, label: "Annotation" }]} />
          </GroupBody>
          <GroupName><span>Insert</span></GroupName>
        </Group>
        <Group $w={627}>
          <GroupBody>
            <BigCmd w={50} icon={<Units />} label="Units" drop />
            <BigCmd w={78} icon={<Worksheet />} label="Worksheet" off />
            <BigCmd w={72} icon={<Keyframe />} label={"Keyframe\nAnimation"} />
            <Col $w={6} />
            <Cmds w={107} items={[{ icon: <Tags />, label: "Tags" }, { icon: <Wizard />, label: "Wizard" }, { icon: <ShowErrors />, label: "Show Errors" }]} />
            <Cmds w={168} items={[{ icon: <ManageViews />, label: "Manage Views" }, { icon: <SelInfo />, label: "Selection Information" }, { icon: <Units s={18} />, label: "Unit Converter" }]} />
            <Cmds w={130} items={[{ icon: <PrintPrev />, label: "Print Preview" }, { icon: <ReportPrev />, label: "Report Preview" }, { icon: <Keyboard />, label: "Key Assignments" }]} />
          </GroupBody>
          <GroupName><span>Tools</span></GroupName>
        </Group>
        <Group $w={195}>
          <GroupBody>
            <BigCmd w={52} icon={<FullScreen />} label={"Full\nScreen"} />
            <Col $w={5} />
            <Cmds w={120} items={[{ icon: <ManageIcon />, label: "Manage", drop: true }, { icon: <UserDefined />, label: "User Defined", drop: true }, { icon: <Reset />, label: "Reset Layout" }]} />
          </GroupBody>
          <GroupName><span>Layout</span></GroupName>
        </Group>
      </Ribbon>

      <Main>
        <Left>
          <PanelHead title="Outline" />
          <OutlineBar>
            <Grip />
            <FilterBox>
              <Combo $w={125} $h={28}><select aria-label="Filter by" defaultValue="Name"><option>Name</option></select><Caret /></Combo>
              <input aria-label="Search outline" placeholder="Search Outline" />
            </FilterBox>
            <PlainButton aria-label="Expand search"><Chevron color={GOLD} w={14} /></PlainButton>
            <Low><Caret color="#222" /></Low>
          </OutlineBar>
          <Scroller>
            <TreeList role="tree">
              {nodes.map((n, i) => (
                <Row key={i} role="treeitem">
                  {n.g.map((g, k) => (
                    <Guide key={k} $g={g}>{n.exp && k === n.g.length - 1 && <Expand aria-label={`Toggle ${n.name}`}><Sign open={n.open} /></Expand>}</Guide>
                  ))}
                  <Mark>{n.mark}</Mark><Art>{n.art}</Art><Name $bold={n.bold} $sel={n.sel}>{n.name}</Name>
                </Row>
              ))}
            </TreeList>
            <ScrollBar size={81} />
          </Scroller>
          <DetailsPanel />
        </Left>

        <Right>
          <ViewBar>
            <Grip />
            <Tool aria-label="Previous view"><Mag><path d="M4 8l4-3v2h4v2H8v2z" fill={GOLD} /></Mag></Tool>
            <Tool aria-label="Next view"><Mag color="#999"><path d="M12 8L8 5v2H4v2h4v2z" fill="#aaa" /></Mag></Tool>
            <Split />
            <Tool $on aria-label="Shaded with edges"><Cube top="#9a9a9a" left="#555" right="#777" line="#333" /></Tool>
            <Tool aria-label="Shaded"><Cube top="#c8c8c8" left="#a2a2a2" right="#808080" line="none" /></Tool>
            <Tool aria-label="Toggle bodies"><SwapCubes /></Tool>
            <Split />
            <Tool aria-label="Explode"><Explode /></Tool>
            <Split />
            <Tool aria-label="Rotate"><Rotate /></Tool>
            <Tool $w={12} aria-label="Rotate options"><Caret /></Tool>
            <Tool aria-label="Pan"><Pan /></Tool>
            <Tool aria-label="Zoom"><Mag><path d="M4.500 8h7M8 4l2 2.500H6zM8 12l2-2.500H6z" stroke={GOLD} fill={GOLD} /></Mag></Tool>
            <Tool aria-label="Box zoom"><Mag><path d="M8 4v8M4 8h8" stroke={GOLD} strokeWidth="2.200" /></Mag></Tool>
            <Tool aria-label="Zoom to fit"><Mag><circle cx="8" cy="8" r="3.500" fill="#7aa0d8" stroke="#345a96" /></Mag></Tool>
            <Tool aria-label="Zoom to selection"><Mag><circle cx="8" cy="8" r="3.500" fill="#3fb55a" stroke="#1f6a34" /></Mag></Tool>
            <Split />
            <TextTool $w={48}>Select</TextTool>
            <TextTool $w={83}><ModeIcon />Mode<Caret /></TextTool>
            <Tool aria-label="Vertex"><SelCube dot /></Tool>
            <Tool aria-label="Edge"><SelCube top="#d8ecd8" dot /></Tool>
            <Tool aria-label="Face"><SelCube top="#12d812" /></Tool>
            <Tool $on aria-label="Body"><SelCube fill="#0ee60e" line="#1e5a1e" /></Tool>
            <Tool aria-label="Node"><SelCube line="#8f8f8f" cross /></Tool>
            <Tool aria-label="Element face"><SelCube line="#8f8f8f" cross top="#ccc" /></Tool>
            <Tool aria-label="Element"><SelCube line="#858585" cross fill="#d5d5d5" /></Tool>
            <Tool aria-label="Hit point"><Wand /></Tool>
            <Tool aria-label="Label"><Wand tag /></Tool>
            <Split />
            <TextTool $w={108}><Clip />Clipboard<Caret /></TextTool>
            <TextTool $w={72}>[ Empty ]</TextTool>
            <Split />
            <TextTool $w={92}><Cube top="#fff" left="#10d010" right="#fff" />Extend<Caret /></TextTool>
            <TextTool $w={105}><Marker />Select By<Caret /></TextTool>
            <TextTool $w={97}><Convert />Convert<Caret /></TextTool>
            <Low><Caret color="#222" w={10} /></Low>
          </ViewBar>
          <Canvas aria-label="Graphics" />
          <Dock>
            <PanelHead title="Messages" h={26} max={false} />
            <DockBody>
              <MsgTable>
                <colgroup><col width={61} /><col width={762} /><col width={382} /><col width={275} /></colgroup>
                <thead><tr><th /><th>Text</th><th>Association</th><th>Timestamp</th></tr></thead>
                <tbody><tr><td>Warning</td><td>One or more objects may have lost some scoping attachments during the geometry update. You can identify these</td><td>Project</td><td>Thursday, March 19, 2020 6:54:24 PM</td></tr></tbody>
              </MsgTable>
            </DockBody>
          </Dock>
        </Right>
      </Main>

      <Status>
        <span>Ready</span>
        <StatusItem $ml={0}>
          <Icon><path d="M0 5h18v9H8l-4 4v-4H0z" fill="#f4d25a" stroke="#b9942a" /><circle cx="10" cy="6" r="6" fill="#1c36b8" /><path d="M8.500 5.500H10V9M8.500 9h3M10 2.500v1.500" stroke="#fff" strokeWidth="1.400" /></Icon>1 Message
        </StatusItem>
        <StatusItem $ml={22}>2 Bodies Selected: Volume = 1.6841e-006 m³</StatusItem>
        <StatusItem $ml={28}><Icon w={12} h={7}><path d="M6 0l6 7H0z" fill="#fff" /></Icon>Metric (m, kg, N, s, V, A)</StatusItem>
        <StatusItem $ml={22}>Degrees</StatusItem><StatusItem $ml={15}>rad/s</StatusItem><StatusItem $ml={15}>Celsius</StatusItem>
      </Status>

      <Taskbar>
        <Start aria-label="Start"><Icon w={20}><path d="M0 3l8-1v7H0zM9 2l11-2v9H9zM0 10h8v8l-8-1zM9 10h11v10L9 18z" fill="#fff" /></Icon></Start>
        <Search><Icon w={21}><circle cx="13" cy="8" r="7" stroke="#222" strokeWidth="1.500" /><path d="M8 13l-7 7" stroke="#222" strokeWidth="1.800" /></Icon><input aria-label="Search Windows" placeholder="Type here to search" /></Search>
        <TaskButton aria-label="Task view"><Icon w={20}><path d="M1 5h12v10H1zM1 1v2h12V1M1 19v-2h12v2M18 1v5M18 10v9" stroke="#fff" strokeWidth="1.400" /><path d="M16.500 6h3v4h-3z" fill="#fff" /></Icon></TaskButton>
        {taskApps.map((a) => (<TaskButton key={a.n} aria-label={a.n} $run={a.run} $bg={a.bg} $line={a.line}>{a.i}</TaskButton>))}
        <Tray>
          <PlainButton aria-label="Hidden icons"><Icon w={18} h={10}><path d="M1 9l8-7 8 7" stroke="#fff" strokeWidth="1.500" /></Icon></PlainButton>
          <PlainButton aria-label="Battery"><Icon w={20} h={18}><path d="M1 3h16v9H1z" stroke="#fff" strokeWidth="1.300" /><path d="M3 5h9v5H3zM18 6h2v3h-2z" fill="#fff" /><circle cx="14" cy="12" r="5.500" fill="#17852b" /><path d="M14 9v6M12 12h4" stroke="#d6f5d9" /></Icon></PlainButton>
          <PlainButton aria-label="Network"><Icon w={20} h={18}><path d="M6 2h13v11H5M3 6v10M1 2h5v4H1zM9 16h7M12 13v3" stroke="#fff" strokeWidth="1.300" /></Icon></PlainButton>
          <PlainButton aria-label="Volume"><Icon w={22} h={18}><path d="M1 6h4l4-4v14l-4-4H1z" stroke="#fff" strokeWidth="1.300" /><path d="M12 6q2 3 0 6M15 4q4 5 0 10M18 2q5 7 0 14" stroke="#fff" strokeWidth="1.300" /></Icon></PlainButton>
          <PlainButton $w={32}>FIN</PlainButton>
          <Clock>7:46 PM<br />20/03/2020</Clock>
          <PlainButton aria-label="4 notifications"><Icon w={32} h={32}><path d="M1 4h20v16h-9l-4 5v-5H1z" fill="#fff" /><path d="M4 8h14M4 12h14M4 16h9" stroke="#222" strokeWidth="1.500" /><circle cx="21" cy="22" r="9.500" fill="#3c3f46" stroke="#999" /><text x="21" y="27" fontSize="13" fontWeight="600" fill="#fff" textAnchor="middle" fontFamily="Open Sans">4</text></Icon></PlainButton>
          <Edge />
        </Tray>
      </Taskbar>
    </Window>
  );
}

const DetailsBox = styled.section`display: flex; flex-direction: column; height: 338px; flex: none; padding-top: 6px;`;

function DetailsPanel() {
  return (
    <DetailsBox>
      <PanelHead title={'Details of "Geom_1903\\Solid"'} h={25} />
      <PropsArea>
        <Props>
          <colgroup><col width={17} /><col width={158} /><col /></colgroup>
          <tbody>
            {details.map((d) => (
              <React.Fragment key={d.cat}>
                <tr><td><Expand aria-label={`Toggle ${d.cat}`}><Sign open={d.open} /></Expand></td><Category colSpan={2}>{d.cat}</Category></tr>
                {(d.rows || []).map(([k, v]) => (
                  <tr key={k}>
                    <td />
                    {k === "Assignment" ? (
                      <><Picked>{k}</Picked><Warn><Fly aria-label="Choose material"><Icon w={5} h={8}><path d="M0 0l5 4-5 4z" fill="#111" /></Icon></Fly></Warn></>
                    ) : (
                      <><th>{k === "Suppressed" ? <label><Box type="checkbox" $s={14} />{k}</label> : k}</th><td>{v}</td></>
                    )}
                  </tr>
                ))}
              </React.Fragment>
            ))}
          </tbody>
        </Props>
        <ScrollBar size={76} />
      </PropsArea>
    </DetailsBox>
  );
}
